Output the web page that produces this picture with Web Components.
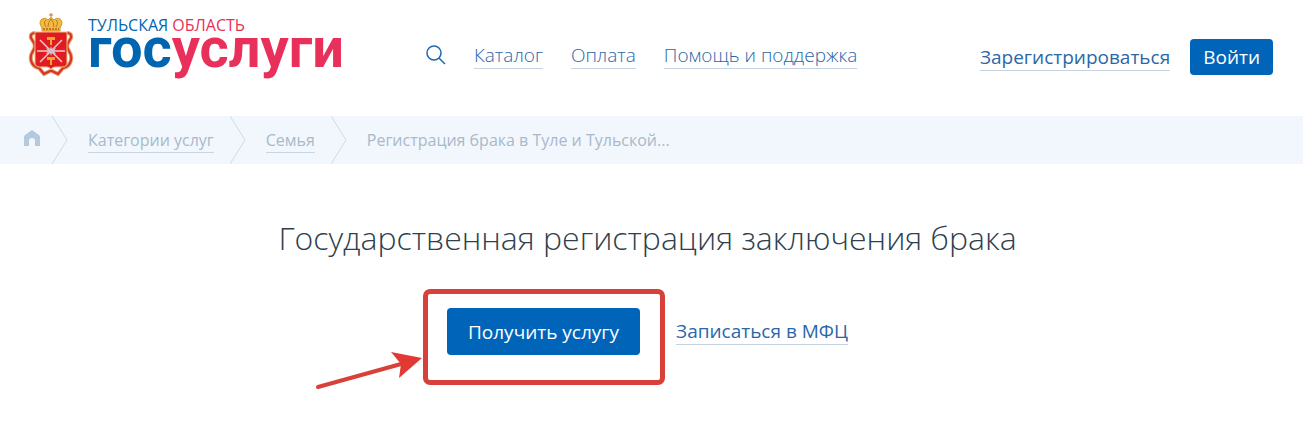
<!DOCTYPE html>
<html lang="ru">
<head>
<meta charset="utf-8">
<meta name="viewport" content="width=device-width, initial-scale=1">
<title>Госуслуги — Тульская область</title>
<style>
body { margin: 0; background: #fff; font-family: "Open Sans", "Noto Sans", sans-serif; color: #2f3f4d; }
</style>
</head>
<body>
<gu-page>
  <gu-header slot="header"></gu-header>
  <gu-breadcrumbs slot="crumbs"></gu-breadcrumbs>
  <gu-hero slot="main">Государственная регистрация заключения брака</gu-hero>
</gu-page>
<script>
const define = (name, html) => customElements.define(name, class extends HTMLElement {
  constructor() {
    super();
    const t = document.createElement('template');
    t.innerHTML = html;
    this.attachShadow({ mode: 'open' }).append(t.content.cloneNode(true));
  }
});

define('gu-link', `
<style>
:host { display: inline-block; }
a { display: block; color: var(--link, #2a67a8); text-decoration: none; border-bottom: 1px solid var(--line, #c6d3e2); white-space: nowrap; }
</style>
<a href="#"><slot></slot></a>`);

define('gu-button', `
<style>
:host { display: inline-block; }
button { display: block; box-sizing: border-box; height: var(--h, 36px); padding: 0 var(--px, 13px); border: 0; border-radius: 4px; background: #0065b9; color: #fff; font: inherit; white-space: nowrap; cursor: pointer; }
</style>
<button type="button"><slot></slot></button>`);

define('gu-logo', `
<style>
:host { display: block; }
a { display: flex; gap: 14px; text-decoration: none; color: #0065b1; }
svg { display: block; width: 46px; height: 64px; }
.words { display: flex; flex-direction: column; padding-top: 2px; white-space: nowrap; }
.region { font-size: 16px; line-height: 20px; }
.name { font-family: Roboto, "Open Sans", sans-serif; font-size: 56px; font-weight: 700; line-height: 26px; }
.r { color: #e8305a; }
</style>
<a href="#">
<svg viewBox="0 0 46 64" fill="none" aria-hidden="true">
  <g id="ribbon">
    <path d="M7 20Q2 20 3 25L6 30Q8 34 5 38Q1 44 4 50Q6 54 11 55L16 61L22 58H24L30 61L35 55Q40 54 42 50Q45 44 41 38Q38 34 40 30L43 25Q44 20 39 20" stroke="#e3a066" stroke-width="4"/>
    <path d="M7 20Q2 20 3 25L6 30Q8 34 5 38Q1 44 4 50Q6 54 11 55L16 61L22 58H24L30 61L35 55Q40 54 42 50Q45 44 41 38Q38 34 40 30L43 25Q44 20 39 20" stroke="#d5322d" stroke-width="2"/>
  </g>
  <path d="M7 19H39V50Q39 54 34 54H27Q24 54 23 57Q22 54 19 54H12Q7 54 7 50Z" fill="#e01b22" stroke="#f0c27e"/>
  <path d="M14 15Q10 9 14 6Q18 4 20 7Q23 3 26 7Q28 4 32 6Q36 9 32 15V18H14Z" fill="#f0bb3e" stroke="#d1962c"/>
  <path d="M18 14Q15 9 18 7M28 14Q31 9 28 7M20 14Q20 9 23 6Q26 9 26 14M23 0V5M21 2H25" stroke="#bf7a20"/>
  <path d="M15 16H31" stroke="#d66a2c" stroke-width="2" stroke-dasharray="2 1"/>
  <path d="M19 24H27V27H24V32H22V27H19ZM19 44H27V47H24V52H22V47H19Z" fill="#f2a72d"/>
  <path d="M12 27L34 49M34 27L12 49M9 38H37" stroke="#efc9cb" stroke-width="1.5"/>
  <path d="M23 33L24 36L28 35L26 38L28 41L24 40L23 43L22 40L18 41L20 38L18 35L22 36Z" fill="#d7bfc5"/>
</svg>
<span class="words"><span class="region">ТУЛЬСКАЯ <span class="r">ОБЛАСТЬ</span></span><span class="name">гос<span class="r">услуги</span></span></span>
</a>`);

define('gu-header', `
<style>
:host { display: flex; align-items: flex-start; box-sizing: border-box; height: 116px; padding: 13px 30px 0 28px; }
nav { display: flex; align-items: flex-start; gap: 28px; margin: 29px 0 0 82px; font-size: 19px; font-weight: 300; line-height: 26px; }
.search { display: block; padding: 0; border: 0; background: none; margin-top: 3px; cursor: pointer; }
svg { display: block; }
.account { display: flex; align-items: center; gap: 20px; margin: 26px 0 0 auto; font-size: 19px; line-height: 26px; }
</style>
<gu-logo></gu-logo>
<nav>
  <button class="search" type="button" aria-label="Поиск"><svg width="20" height="20" viewBox="0 0 20 20" fill="none" stroke="#1f68ad" stroke-width="1.5"><circle cx="8" cy="8" r="7"/><path d="M13 13L19 19"/></svg></button>
  <gu-link>Каталог</gu-link><gu-link>Оплата</gu-link><gu-link>Помощь и поддержка</gu-link>
</nav>
<div class="account"><gu-link>Зарегистрироваться</gu-link><gu-button>Войти</gu-button></div>`);

define('gu-breadcrumbs', `
<style>
:host { display: block; background: #f1f7fd; color: #a9b9ca; font-size: 16px; line-height: 24px; --link: #a9b9ca; --line: #c8d5e2; }
ol { display: flex; align-items: center; height: 48px; margin: 0; padding: 0 24px; list-style: none; white-space: nowrap; }
li { display: flex; align-items: center; }
svg { display: block; }
.sep { margin: 0 20px 0 16px; }
.home + .sep { margin-left: 12px; }
.home { margin-bottom: 4px; }
</style>
<ol>
  <li><a class="home" href="#" aria-label="Главная"><svg width="16" height="16" viewBox="0 0 16 16"><path d="M8 0L15 5Q16 6 16 7V16H11V11Q11 8 8 8T5 11V16H0V7Q0 6 1 5Z" fill="#b4c9de"/></svg></a>
  <svg class="sep" width="16" height="48" fill="none" stroke="#cddbe7"><path d="M0 0L15 24L0 48"/></svg></li>
  <li><gu-link>Категории услуг</gu-link><svg class="sep" width="16" height="48" fill="none" stroke="#cddbe7"><path d="M0 0L15 24L0 48"/></svg></li>
  <li><gu-link>Семья</gu-link><svg class="sep" width="16" height="48" fill="none" stroke="#cddbe7"><path d="M0 0L15 24L0 48"/></svg></li>
  <li aria-current="page">Регистрация брака в Туле и Тульской...</li>
</ol>`);

define('gu-callout', `
<style>
:host { display: block; position: relative; }
.frame { position: absolute; inset: -19px -25px -30px -24px; border: 5px solid #d8403a; border-radius: 7px; pointer-events: none; }
svg { position: absolute; right: 100%; top: 42px; margin-right: 24px; pointer-events: none; }
</style>
<slot></slot>
<div class="frame"></div>
<svg width="108" height="42" viewBox="0 0 108 42" aria-hidden="true"><path d="M3 37L86 14" stroke="#d8403a" stroke-width="4" stroke-linecap="round"/><path d="M107 8L76 2L86 14L84 28Z" fill="#e23a33"/></svg>`);

define('gu-hero', `
<style>
:host { display: flex; flex-direction: column; align-items: center; padding: 50px 8px 69px 0; }
h1 { margin: 0; font-size: 32px; font-weight: 300; line-height: 48px; text-align: center; }
.actions { display: flex; align-items: center; gap: 36px; margin-top: 46px; font-size: 19px; line-height: 26px; --h: 47px; --px: 21px; }
</style>
<h1><slot></slot></h1>
<div class="actions"><gu-callout><gu-button>Получить услугу</gu-button></gu-callout><gu-link>Записаться в МФЦ</gu-link></div>`);

define('gu-page', `
<style>:host { display: block; overflow-x: hidden; }</style>
<header><slot name="header"></slot></header>
<nav aria-label="Навигация"><slot name="crumbs"></slot></nav>
<main><slot name="main"></slot></main>`);
</script>
</body>
</html>
